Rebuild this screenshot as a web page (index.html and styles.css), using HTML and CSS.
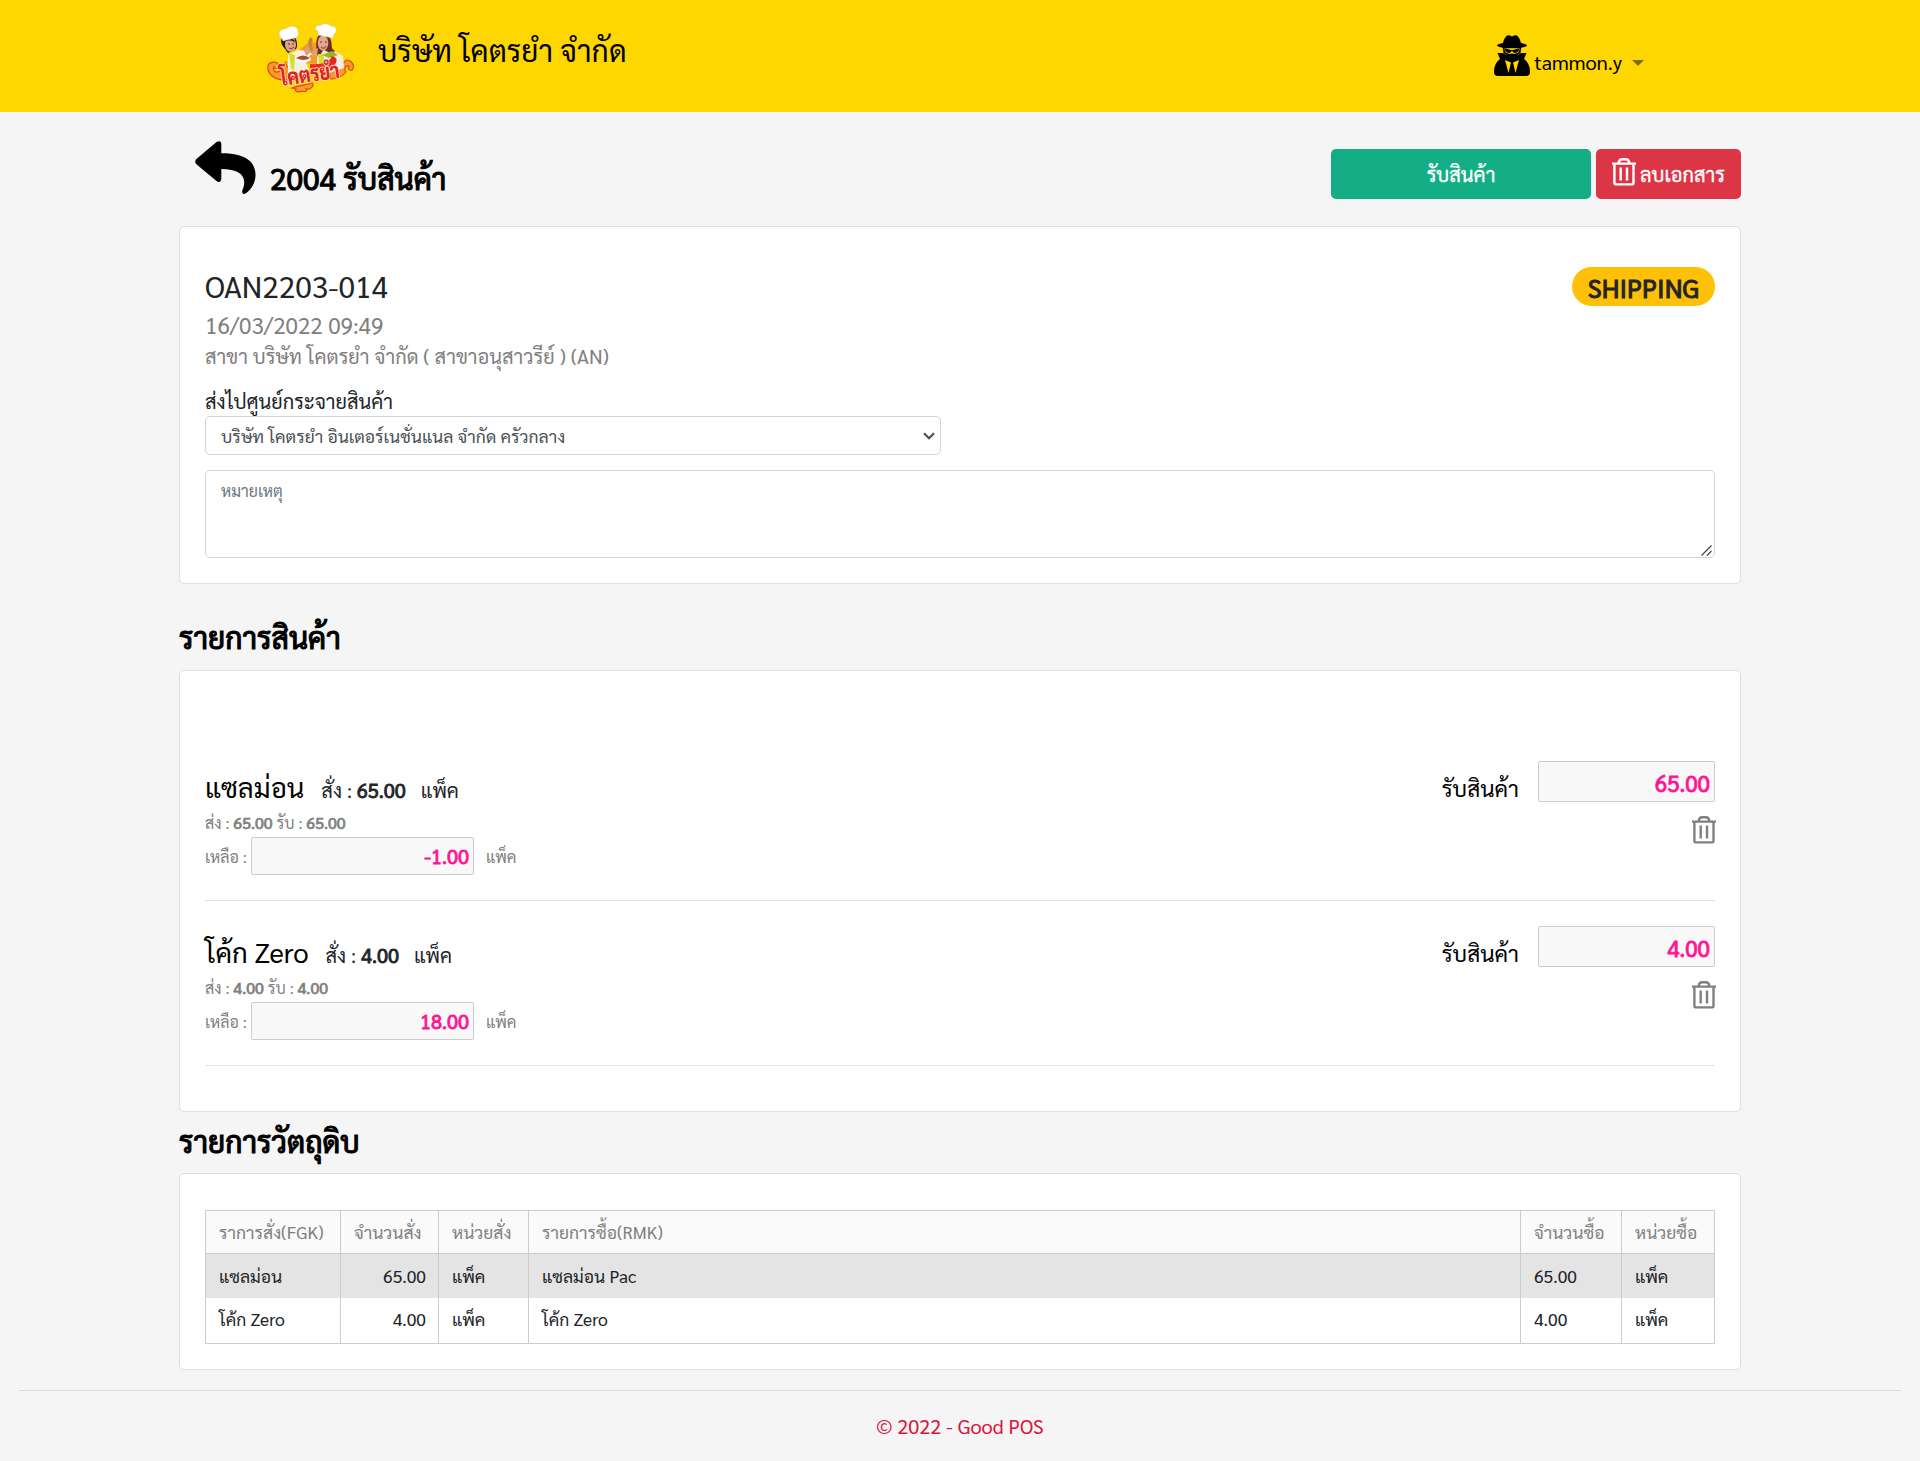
FILE: index.html
```html
<!DOCTYPE html>
<html lang="th">
<head>
<meta charset="utf-8">
<title>2004 รับสินค้า - Good POS</title>
<link rel="stylesheet" href="styles.css">
</head>
<body>
<svg width="0" height="0" class="defs" aria-hidden="true">
  <symbol id="trash" viewBox="0 0 24 28">
    <path d="M0 5.6H24M6.6 5C7 2.2 8 1.3 10 1.3H14C16 1.3 17 2.2 17.4 5M2.4 5.6V24.8Q2.4 26.4 4 26.4H20Q21.500 26.4 21.500 24.8V5.6M8.7 9.4V22.500M15 9.4V22.500" fill="none" stroke="currentColor"/>
  </symbol>
</svg>

<header class="topbar">
  <svg class="logo" viewBox="0 0 96 84" width="96" height="84" role="img" aria-label="โคตรยำ">
    <g fill="#f79a2a" stroke="#dc4a1c" stroke-width="1.200">
      <path d="M20 66C9 64 5 59 6 51C9 47 16 47 17 52C17 55 13 56 12 53C10 58 15 59 18 57C23 54 20 50 24 48C24 54 28 55 32 52L36 66Z"/>
      <path d="M68 60C67 53 73 53 75 47C79 50 82 50 84 46C91 46 93 53 90 56C87 57 85 54 87 52C82 51 82 56 84 58C80 63 74 65 69 65Z"/>
      <path d="M30 74C35 72 43 71 50 69C53 71 49 76 44 75C46 78 42 78 40 77C35 79 32 77 34 75Z"/>
      <path d="M37 36L46 29L55 28L61 37L58 50L40 49Z" stroke="none"/>
    </g>
    <path d="M26 41L36 36L46 37L50 40L43 46L47 57L26 60Z" fill="#f4f2e8"/>
    <path d="M55 43L62 36L72 37L81 42L82 54L64 60L55 53Z" fill="#f1efe2"/>
    <path d="M20 31C17 23 22 20 28 21C36 22 36 33 34 35L26 39Z" fill="#221b19"/>
    <ellipse cx="28.500" cy="30.500" rx="5.500" ry="7.300" fill="#dfa384"/>
    <path d="M22 29C21 22 31 22 34 29C29 25 26 27 24 27Z" fill="#251d1b"/>
    <path d="M55 40C54 32 53 22 59 20L67 23C72 28 67 34 73 37C68 42 64 35 61 36C58 43 56 42 55 40Z" fill="#702d1f"/>
    <ellipse cx="61" cy="29" rx="5.300" ry="7.400" fill="#e4a78c"/>
    <path d="M20 25C15 21 17 14 24 15C28 10 37 12 36 18C38 21 34 24 33 24L21 27Z" fill="#fff" stroke="#cfc7a8" stroke-width=".5"/>
    <path d="M56 21L56 17C51 16 54 10 58 12C62 8 67 10 69 12C76 12 75 19 72 20L71 24Z" fill="#fff" stroke="#cfc7a8" stroke-width=".5"/>
    <path d="M26 30H28M30 30H32M27 34Q30 36 32 33M58 28H60M63 28H65M59 33Q62 36 64 32" fill="none" stroke="#633" stroke-width="1"/>
    <path d="M27 39L33 41L32 57L29 54ZM56 40L61 40L64 53L58 56Z" fill="#d5df25"/>
    <path d="M48 23Q52 24 50 30L51 37H47L46 28Z" fill="#c68a33"/>
    <path d="M42 36L46 31L49 38L44 42ZM51 36L56 34L55 42L50 42Z" fill="#dca27d"/>
    <ellipse cx="41" cy="45" rx="8" ry="3.500" fill="#fff"/>
    <path d="M34 44Q41 39 48 44Q42 48 34 44Z" fill="#b7452a"/>
    <path d="M60 41L70 37L76 41L67 44Z" fill="#9ab52b"/>
    <path d="M48 50C60 51 68 48 70 42Q78 44 72 52Q62 58 48 54Z" fill="#e62a20"/>
    <text class="logo-text" x="19" y="72" textLength="60" lengthAdjust="spacingAndGlyphs" transform="rotate(-8 19 72)">โคตรยำ</text>
  </svg>
  <h1 class="company">บริษัท โคตรยำ จำกัด</h1>
  <div class="user">
    <svg width="36" height="41" viewBox="0 0 36 41">
      <path d="M3 10.500C3 9.400 6 8.600 9 8C10 4 12 .5 14 .3C16 0 17 1.300 18 1.300S20 0 22 .3C24 .6 26 4 27 8C30 8.600 33 9.400 33 10.500C33 12 26 13.200 18 13.200S3 12 3 10.500Z"/>
      <path d="M8.700 12H27.300L26.500 18L18 24L9.500 18Z"/>
      <path d="M10.300 13.300H25.700L25 17Q23 19.500 18 18.500Q13 19.500 11 17Z" fill="#ffd700"/>
      <path d="M10.500 13.300L17 15H19L25.500 13.300C25.500 18.500 19.500 19 18.600 16.300H17.400C16.500 19 10.500 18.500 10.500 13.300Z"/>
      <path d="M3.500 18H9L12 20L18 21L24 20L27 18H32.500L30 24Q36 28 36 37Q36 41 32 41H4Q0 41 0 37Q0 28 6 24Z"/>
      <path d="M11 25L17 27.500L14.500 38ZM25 25L19 27.500L21.500 38Z" fill="#ffd700"/>
    </svg>
    <span>tammon.y</span><i class="caret"></i>
  </div>
</header>

<main class="page">
  <div class="titlebar">
    <svg class="back" width="61" height="54" viewBox="0 0 61 54"><path d="M1.400 18L21.500 1Q25.800-1.200 26.300 2.500V12.300C48 12.300 60.500 19 60.500 34C60.500 42 56 48.500 51 52.300Q46.500 54.500 47.300 49.500C53 36 46 28 26.300 28V37.500Q26 42.500 21.800 40.300L1.400 23.300Q-.9 20.700 1.400 18Z"/></svg>
    <h2 class="heading">2004 รับสินค้า</h2>
    <button class="btn btn-receive">รับสินค้า</button>
    <button class="btn btn-delete"><svg width="24" height="28"><use href="#trash"/></svg>ลบเอกสาร</button>
  </div>

  <section class="card doc">
    <div class="doc-head">
      <div>
        <div class="doc-no">OAN2203-014</div>
        <div class="doc-date">16/03/2022 09:49</div>
        <div class="doc-branch">สาขา บริษัท โคตรยำ จำกัด ( สาขาอนุสาวรีย์ ) (AN)</div>
      </div>
      <span class="badge">SHIPPING</span>
    </div>
    <label class="field-label">ส่งไปศูนย์กระจายสินค้า</label>
    <div class="select-wrap">
      <select class="select"><option>บริษัท โคตรยำ อินเตอร์เนชั่นแนล จำกัด ครัวกลาง</option></select>
      <svg class="chevron" width="12" height="8" viewBox="0 0 12 8"><path d="M1 1.200L6 6.200L11 1.200" fill="none" stroke="#495057" stroke-width="2.200"/></svg>
    </div>
    <div class="note-wrap">
      <textarea class="note" placeholder="หมายเหตุ"></textarea>
      <svg class="grip" width="11" height="11" viewBox="0 0 11 11"><path d="M.5 10.500L10.500 .5M6 10.500L10.500 6" fill="none" stroke="#444" stroke-width="1.200"/></svg>
    </div>
  </section>

  <h2 class="heading section-items">รายการสินค้า</h2>
  <section class="card items">
    <div class="item">
      <div class="item-info">
        <div class="item-name"><span class="name">แซลม่อน</span><span class="ordered">สั่ง : <b>65.00</b></span><span class="unit">แพ็ค</span></div>
        <div class="item-sent">ส่ง : <b>65.00</b> รับ : <b>65.00</b></div>
        <div class="item-left"><span class="left-label">เหลือ :</span><input class="num num-left" value="-1.00"><span class="left-unit">แพ็ค</span></div>
      </div>
      <div class="receive-label">รับสินค้า</div>
      <div class="receive"><input class="num num-receive" value="65.00"><svg width="24" height="28"><use href="#trash"/></svg></div>
    </div>
    <div class="item">
      <div class="item-info">
        <div class="item-name"><span class="name">โค้ก Zero</span><span class="ordered">สั่ง : <b>4.00</b></span><span class="unit">แพ็ค</span></div>
        <div class="item-sent">ส่ง : <b>4.00</b> รับ : <b>4.00</b></div>
        <div class="item-left"><span class="left-label">เหลือ :</span><input class="num num-left" value="18.00"><span class="left-unit">แพ็ค</span></div>
      </div>
      <div class="receive-label">รับสินค้า</div>
      <div class="receive"><input class="num num-receive" value="4.00"><svg width="24" height="28"><use href="#trash"/></svg></div>
    </div>
  </section>

  <h2 class="heading section-materials">รายการวัตถุดิบ</h2>
  <section class="card materials">
    <table class="grid">
      <colgroup><col class="c1"><col class="c2"><col class="c3"><col class="c4"><col class="c5"><col class="c6"></colgroup>
      <thead><tr><th>ราการสั่ง(FGK)</th><th>จำนวนสั่ง</th><th>หน่วยสั่ง</th><th>รายการซื้อ(RMK)</th><th>จำนวนซื้อ</th><th>หน่วยซื้อ</th></tr></thead>
      <tbody>
        <tr class="selected"><td>แซลม่อน</td><td class="right">65.00</td><td>แพ็ค</td><td>แซลม่อน Pac</td><td>65.00</td><td>แพ็ค</td></tr>
        <tr class="last"><td>โค้ก Zero</td><td class="right">4.00</td><td>แพ็ค</td><td>โค้ก Zero</td><td>4.00</td><td>แพ็ค</td></tr>
      </tbody>
    </table>
  </section>
</main>
<footer class="footer">© 2022 - Good POS</footer>
</body>
</html>
```

FILE: styles.css
```css
* { box-sizing: border-box; }
body { margin: 0; background: #f5f5f5; color: #212529; font: 20px/30px Sarabun, "Noto Sans", sans-serif; }
h1, h2 { margin: 0; }
.defs { display: block; position: absolute; }
#trash { stroke-width: 2.4px; }
button, input, select, textarea { font-family: inherit; margin: 0; }

.topbar { display: flex; align-items: flex-start; height: 112px; padding: 14px 276px 0 262px; background: #ffd700; color: #000; }
.logo { flex: none; }
.logo-text { font-size: 22px; font-weight: 800; fill: #e21f26; stroke: #fbe3c0; stroke-width: 1.6px; paint-order: stroke; }
.company { margin: 13px 0 0 20px; font-size: 30px; line-height: 45px; font-weight: 400; }
.user { display: flex; align-items: flex-start; margin: 21px 0 0 auto; }
.user span { margin: 12px 10px 0 4px; }
.caret { margin-top: 25px; border: 6px solid transparent; border-top-color: rgba(0, 0, 0, .5); border-bottom: 0; }

.page { width: 1562px; margin: 0 auto; }
.titlebar { display: flex; align-items: flex-start; height: 114px; padding-top: 29px; }
.back { margin-left: 16px; }
.heading { font-size: 30px; line-height: 45px; font-weight: 400; -webkit-text-stroke: 1.1px; color: #000; }
.titlebar .heading { margin: 14px auto 0 14px; }
.btn { display: flex; align-items: center; justify-content: center; height: 50px; margin-top: 8px; border: 0; border-radius: 5px; padding: 0; color: #fff; font-size: 20px; line-height: 30px; }
.btn-receive { width: 260px; background: #13ad86; -webkit-text-stroke: .3px; }
.btn-delete { width: 145px; margin-left: 5px; gap: 4px; background: #dc3545; -webkit-text-stroke: .3px; }
.btn-delete svg { margin-bottom: 5px; stroke-width: 2.8px; }

.card { border: 1px solid #dfdfdf; border-radius: 5px; background: #fff; }
.doc { height: 358px; padding: 36px 25px 0; }
.doc-head { display: flex; justify-content: space-between; }
.doc-no { font-size: 30px; line-height: 45px; }
.doc-date { font-size: 22.5px; line-height: 33px; color: gray; }
.doc-branch { color: gray; }
.badge { width: 143px; height: 39px; margin-top: 4px; padding-top: 1px; border-radius: 20px; background: #ffc107; font-size: 26.2px; line-height: 39px; -webkit-text-stroke: 1px; text-align: center; }
.field-label { display: block; margin-top: 15px; }
.select-wrap { position: relative; width: 736px; height: 39px; }
.select { display: block; width: 100%; height: 39px; padding: 0 15px; appearance: none; border: 1px solid #ced4da; border-radius: 5px; background: #fff; color: #495057; font-size: 17.5px; }
.chevron { position: absolute; right: 6px; top: 16px; }
.note-wrap { position: relative; height: 88px; margin-top: 15px; }
.note { display: block; width: 100%; height: 88px; padding: 8px 15px; resize: none; border: 1px solid #ced4da; border-radius: 5px; font-size: 16px; line-height: 24px; }
.note::placeholder { color: #6c757d; }
.grip { position: absolute; right: 3px; bottom: 2px; }

.section-items { margin: 30px 0 11px; }
.items { height: 442px; padding: 90px 25px 0; }
.item { display: flex; height: 140px; margin-bottom: 25px; border-bottom: 1px solid #e2e2e2; }
.item-info { flex: 1; padding-top: 5px; }
.item-name { display: flex; align-items: baseline; height: 45px; line-height: 41px; }
.name { color: #000; font-size: 27.5px; }
.ordered { margin-left: 17px; }
.unit { margin-left: 15px; }
b { font-weight: 400; -webkit-text-stroke: .8px; }
.item-sent { color: gray; font-size: 16px; line-height: 24px; }
.item-sent b { -webkit-text-stroke: .7px; }
.item-left { display: flex; align-items: center; height: 38px; margin-top: 2px; color: gray; font-size: 16px; }
.left-label, .left-unit { padding-top: 2px; }
.left-label { width: 46px; }
.num { padding: 0 4px; border: 1px solid #ccc; border-radius: 2px; background: #f8f8f8; color: #ff1493; -webkit-text-stroke: .8px; text-align: right; outline: 0; }
.num-left { width: 223px; height: 38px; margin-right: 12px; font-size: 20px; }
.receive-label { margin-right: 19px; padding-top: 11px; color: #000; font-size: 22.5px; line-height: 32px; }
.receive { display: flex; flex-direction: column; align-items: flex-end; color: gray; }
.receive svg { margin: 14px -1px 0 0; }
.num-receive { width: 177px; height: 41px; padding-top: 1px; font-size: 22.5px; }

.section-materials { margin: 6px 0 10px; }
.materials { height: 197px; padding: 36px 25px 0; }
.grid { width: 1509px; table-layout: fixed; border-collapse: collapse; font-size: 17.5px; line-height: 26px; }
.c1 { width: 135px; } .c2 { width: 98px; } .c3 { width: 90px; } .c4 { width: 992px; } .c5 { width: 101px; } .c6 { width: 93px; }
.grid th, .grid td { height: 44px; padding: 0 12px 0 13px; border: 1px solid #ccc; text-align: left; white-space: nowrap; }
.grid th { height: 43px; background: #fafafa; color: gray; font-weight: 400; }
.grid .selected td { background: #e4e4e4; border-bottom: 0; }
.grid .last td { height: 46px; padding-bottom: 2px; border-top: 0; }
.grid td.right { text-align: right; }

.footer { height: 70px; margin: 20px 19px 0; padding-top: 20px; border-top: 1px solid #dcdcdc; color: #dc143c; text-align: center; }
```
